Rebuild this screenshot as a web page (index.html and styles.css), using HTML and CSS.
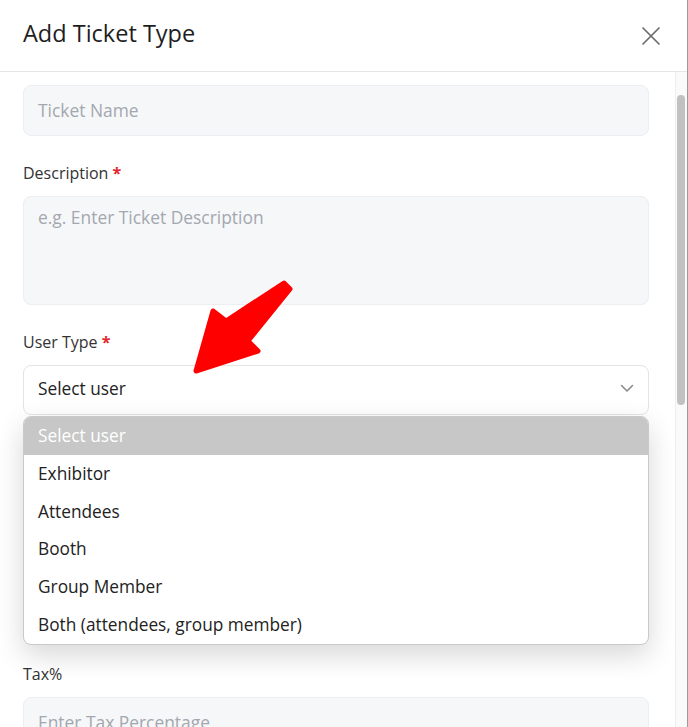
FILE: index.html
```html
<!DOCTYPE html>
<html>
<head>
    <meta charset="utf-8">
    <meta name="viewport" content="width=device-width, initial-scale=1.0">
    <link rel="stylesheet" href="styles.css">
    <script>
        window.onload = function() {
            const body = document.getElementById('modal_body');
            body.scrollTop = 45;
        };
    </script>
</head>
<body>
<div class="modal">
    <div class="modal_header">
        <h2 class="modal_title">Add Ticket Type</h2>
        <button type="button" class="btn_close" aria-label="Close">
            <svg width="20" height="20" viewBox="0 0 20 20"><path d="M2 2L18 18M18 2L2 18" stroke="#6b6b6b" stroke-width="1.7" stroke-linecap="round"/></svg>
        </button>
    </div>
    <div class="modal_main">
        <div id="modal_body" class="modal_body">
            <div class="field">
                <label class="field_label">Ticket Name <span class="req">*</span></label>
                <div class="input is_placeholder">Ticket Name</div>
            </div>
            <div class="field">
                <label class="field_label">Description <span class="req">*</span></label>
                <div class="input textarea is_placeholder">e.g. Enter Ticket Description</div>
            </div>
            <div class="field">
                <label class="field_label">User Type <span class="req">*</span></label>
                <div class="select_wrap">
                    <div class="select">
                        <span>Select user</span>
                        <svg width="14" height="9" viewBox="0 0 14 9"><path d="M1.5 1.5L7 7L12.5 1.5" fill="none" stroke="#8a8a8a" stroke-width="1.6" stroke-linecap="round" stroke-linejoin="round"/></svg>
                    </div>
                    <ul class="select_menu">
                        <li class="is_active">Select user</li>
                        <li>Exhibitor</li>
                        <li>Attendees</li>
                        <li>Booth</li>
                        <li>Group Member</li>
                        <li>Both (attendees, group member)</li>
                    </ul>
                </div>
            </div>
            <div class="field">
                <label class="field_label">Price <span class="req">*</span></label>
                <div class="input is_placeholder">Enter Price</div>
            </div>
            <div class="field">
                <label class="field_label">Quantity <span class="req">*</span></label>
                <div class="input is_placeholder">Enter Quantity</div>
            </div>
            <div class="field">
                <label class="field_label">Tax%</label>
                <div class="input is_placeholder">Enter Tax Percentage</div>
            </div>
            <div class="field">
                <label class="field_label">Early Bird Price</label>
                <div class="input is_placeholder">Enter Early Bird Price</div>
            </div>
            <div class="field">
                <label class="field_label">Sale Start Date</label>
                <div class="input is_placeholder">Select Date</div>
            </div>
            <div class="field">
                <label class="field_label">Sale End Date</label>
                <div class="input is_placeholder">Select Date</div>
            </div>
            <div class="field">
                <label class="field_label">Max Per Order</label>
                <div class="input is_placeholder">Enter Max Quantity</div>
            </div>
            <div class="modal_footer">
                <button type="button" class="btn">Cancel</button>
                <button type="button" class="btn btn_primary">Save</button>
            </div>
        </div>
        <div class="scroll_track"><div class="scroll_thumb"></div></div>
    </div>
    <svg class="pointer_arrow" width="688" height="727" viewBox="0 0 688 727">
        <polygon points="284,283 290,289 248,341 258,351 196,371 213,311 226,321" fill="#ff0000" stroke="#ff0000" stroke-width="5" stroke-linejoin="round"/>
    </svg>
</div>
</body>
</html>
```

FILE: styles.css
```css
html, body {
    margin: 0;
    padding: 0;
    height: 100%;
    background: #fff;
}

body {
    font-family: "Open Sans", "Liberation Sans", sans-serif;
    color: #222;
}

.modal {
    position: relative;
    display: flex;
    flex-direction: column;
    height: 727px;
    overflow: hidden;
    border-right: 1px solid #9a9a9a;
    box-sizing: border-box;
}

.modal_header {
    display: flex;
    align-items: center;
    justify-content: space-between;
    flex: none;
    height: 71px;
    padding: 0 26px 0 23px;
    border-bottom: 1px solid #e6e6e6;
}

.modal_title {
    margin: 0 0 6px;
    font-size: 23.5px;
    font-weight: 400;
    color: #1e1e1e;
}

.btn_close {
    display: flex;
    padding: 0;
    border: 0;
    background: none;
}

.modal_main {
    display: flex;
    flex: 1;
    min-height: 0;
}

.modal_body {
    flex: 1;
    overflow: hidden;
    padding: 24px 26px 80px 23px;
}

.scroll_track {
    flex: none;
    width: 10px;
    padding: 23px 1px 0 0;
    background: #fafafa;
    border-left: 1px solid #eeeeee;
}

.scroll_thumb {
    width: 8px;
    height: 310px;
    margin-left: 1px;
    background: #c1c1c1;
    border-radius: 4px;
}

.field {
    margin-bottom: 26px;
}

.field_label {
    display: block;
    height: 22px;
    line-height: 22px;
    margin-bottom: 12px;
    font-size: 16px;
    color: #333;
}

.req {
    color: #e3242b;
    font-weight: 700;
}

.input {
    box-sizing: border-box;
    height: 51px;
    padding: 0 14px;
    line-height: 48px;
    font-size: 17.4px;
    background: #f6f7f9;
    border: 1px solid #eceef1;
    border-radius: 8px;
}

.input.is_placeholder {
    color: #a3a7ae;
}

.input.textarea {
    height: 109px;
    line-height: 20px;
    padding-top: 10px;
}

.select_wrap {
    position: relative;
}

.select {
    box-sizing: border-box;
    display: flex;
    align-items: center;
    justify-content: space-between;
    height: 50px;
    padding: 0 14px 3px 14px;
    font-size: 17.3px;
    color: #222;
    background: #fff;
    border: 1px solid #e4e4e4;
    border-radius: 8px;
}

.select_menu {
    position: absolute;
    top: 51px;
    left: 0;
    right: 0;
    z-index: 10;
    margin: 0;
    padding: 0;
    list-style: none;
    background: #fff;
    border: 1px solid #c9c9c9;
    border-radius: 8px;
    overflow: hidden;
    box-shadow: 0 10px 28px rgba(0, 0, 0, 0.16);
}

.select_menu li {
    height: 37.8px;
    line-height: 37px;
    padding: 0 14px;
    font-size: 17.3px;
    color: #222;
}

.select_menu li.is_active {
    background: #c7c7c7;
    color: #fff;
}

.modal_footer {
    display: flex;
    justify-content: flex-end;
    gap: 12px;
}

.btn {
    height: 44px;
    padding: 0 24px;
    font-family: inherit;
    font-size: 16px;
    border: 1px solid #ddd;
    border-radius: 8px;
    background: #fff;
}

.btn_primary {
    background: #2f6fed;
    border-color: #2f6fed;
    color: #fff;
}

.pointer_arrow {
    position: absolute;
    top: 0;
    left: 0;
    z-index: 20;
    pointer-events: none;
}
```
